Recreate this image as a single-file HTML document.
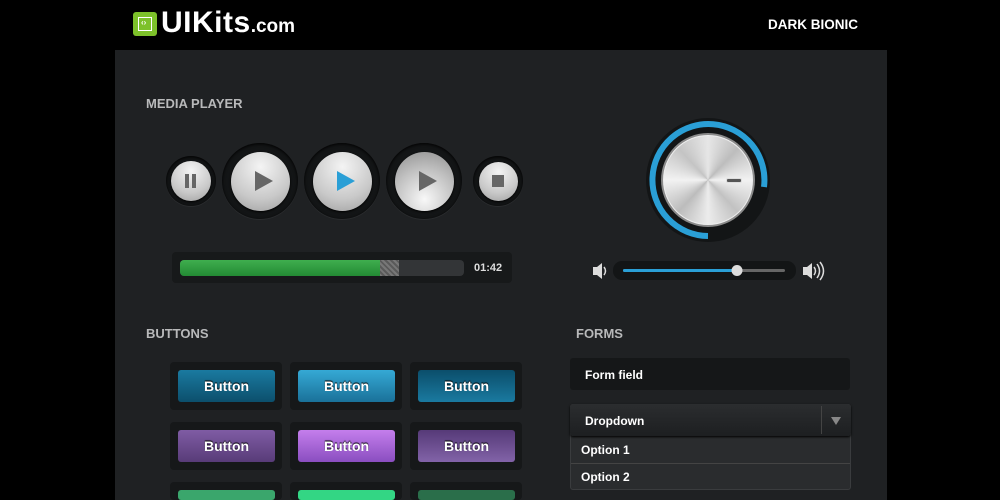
<!DOCTYPE html><html><head><style>
*{margin:0;padding:0;box-sizing:border-box}
html{width:1000px;height:500px;overflow:hidden}
body{width:1000px;height:500px;background:#000;position:relative;overflow:hidden;font-family:"Liberation Sans",sans-serif}
.a{position:absolute}
.panel{left:115px;top:50px;width:772px;height:450px;background:#1f2123}
.h{color:#b8b9ba;font-weight:bold;font-size:13px}
.well{border-radius:50%;background:#131516;box-shadow:inset 0 1px 3px #000,0 1px 0 #2a2c2e}
.btn{border-radius:50%;background:radial-gradient(circle at 50% 25%,#f4f4f4,#c9c9c9 60%,#9d9d9d);box-shadow:0 1px 2px #000}
.bw{width:112px;height:48px;background:#161819;border-radius:4px}
.b{width:97px;height:32px;border-radius:3px;color:#fff;font-weight:bold;font-size:14px;text-align:center;line-height:32px;text-shadow:0 -1px 1px #000}
</style></head><body>
<div class="a" style="left:133px;top:12px;width:24px;height:24px;background:#7dc12a;border-radius:3px"><div class="a" style="left:5px;top:5px;width:14px;height:14px;border:1.5px solid #fff"></div><div class="a" style="left:8px;top:6px;font-size:8px;color:#fff;font-weight:bold">‹›</div></div>
<div class="a" style="left:161px;top:6px;color:#fff;font-weight:bold;font-size:30px;letter-spacing:0.5px">UIKits<span style="font-size:19px;letter-spacing:0">.com</span></div>
<div class="a" style="left:768px;top:17px;color:#fff;font-weight:bold;font-size:13.5px">DARK BIONIC</div>
<div class="a panel"></div>
<div class="a h" style="left:146px;top:96px">MEDIA PLAYER</div>
<div class="a h" style="left:146px;top:326px">BUTTONS</div>
<div class="a h" style="left:576px;top:326px">FORMS</div>

<div class="a well" style="left:166px;top:156px;width:50px;height:50px"></div>
<div class="a btn" style="left:171px;top:161px;width:40px;height:40px"></div>
<div class="a" style="left:185px;top:174px;width:4px;height:14px;background:#666"></div><div class="a" style="left:192px;top:174px;width:4px;height:14px;background:#666"></div>
<div class="a well" style="left:222px;top:143px;width:76px;height:76px"></div>
<div class="a btn" style="left:231px;top:152px;width:59px;height:59px"></div>
<div class="a" style="left:255px;top:171px;border-left:18px solid #666;border-top:10px solid transparent;border-bottom:10px solid transparent"></div>
<div class="a well" style="left:304px;top:143px;width:76px;height:76px"></div>
<div class="a btn" style="left:313px;top:152px;width:59px;height:59px"></div>
<div class="a" style="left:337px;top:171px;border-left:18px solid #2a9fd6;border-top:10px solid transparent;border-bottom:10px solid transparent"></div>
<div class="a well" style="left:386px;top:143px;width:76px;height:76px"></div>
<div class="a btn" style="left:395px;top:152px;width:59px;height:59px;background:radial-gradient(circle at 50% 80%,#f8f8f8,#c0c0c0 55%,#8d8d8d)"></div>
<div class="a" style="left:419px;top:171px;border-left:18px solid #666;border-top:10px solid transparent;border-bottom:10px solid transparent"></div>
<div class="a well" style="left:473px;top:156px;width:50px;height:50px"></div>
<div class="a btn" style="left:479px;top:162px;width:39px;height:39px"></div>
<div class="a" style="left:492px;top:175px;width:12px;height:12px;background:#666"></div>

<div class="a" style="left:172px;top:252px;width:340px;height:31px;background:#17191a;border-radius:4px"></div>
<div class="a" style="left:180px;top:260px;width:284px;height:16px;background:#333537;border-radius:4px"></div>
<div class="a" style="left:180px;top:260px;width:200px;height:16px;background:linear-gradient(#3fae4e,#238a34);border-radius:4px 0 0 4px"></div>
<div class="a" style="left:380px;top:260px;width:19px;height:16px;background:repeating-linear-gradient(45deg,#777 0 2px,#5a5a5a 2px 4px)"></div>
<div class="a" style="left:474px;top:262px;color:#ddd;font-weight:bold;font-size:11px">01:42</div>

<svg class="a" style="left:640px;top:112px" width="136" height="136" viewBox="0 0 136 136">
<circle cx="68" cy="68" r="62" fill="#131516"/>
<path d="M68 124 A56 56 0 1 1 124 75" fill="none" stroke="#2a9fd6" stroke-width="6"/>
<circle cx="68" cy="68" r="47" fill="#8a8a8a"/>
</svg>
<div class="a" style="left:663px;top:135px;width:90px;height:90px;border-radius:50%;background:conic-gradient(from 0deg,#e6e6e6,#bdbdbd 12%,#f2f2f2 25%,#c2c2c2 38%,#ececec 50%,#bcbcbc 62%,#f2f2f2 75%,#c4c4c4 88%,#e6e6e6);border:1.5px solid #eee"></div>
<div class="a" style="left:726px;top:178px;width:16px;height:5px;border-radius:2px;background:#555;border:1px solid #ddd"></div>
<svg class="a" style="left:590px;top:261px" width="236" height="20">
<path d="M3 6h4l5-4v16l-5-4H3z" fill="#ddd"/><path d="M14 6q3 4 0 8" stroke="#ddd" fill="none" stroke-width="1.5"/>
<rect x="23" y="0" width="183" height="19" rx="9" fill="#131516"/>
<rect x="33" y="8" width="162" height="3" rx="1.5" fill="#666"/>
<rect x="33" y="8" width="114" height="3" rx="1.5" fill="#2a9fd6"/>
<circle cx="147" cy="9.5" r="5.5" fill="#ddd"/>
<path d="M213 6h4l5-4v16l-5-4h-4z" fill="#ddd"/><path d="M224 6q3 4 0 8M227 3q5 7 0 14M230 1q7 9 0 18" stroke="#ddd" fill="none" stroke-width="1.5"/>
</svg>

<div class="a bw" style="left:170px;top:362px"></div><div class="a bw" style="left:290px;top:362px"></div><div class="a bw" style="left:410px;top:362px"></div>
<div class="a bw" style="left:170px;top:422px"></div><div class="a bw" style="left:290px;top:422px"></div><div class="a bw" style="left:410px;top:422px"></div>
<div class="a bw" style="left:170px;top:482px;height:18px"></div><div class="a bw" style="left:290px;top:482px;height:18px"></div><div class="a bw" style="left:410px;top:482px;height:18px"></div>
<div class="a b" style="left:178px;top:370px;background:linear-gradient(#1a7aa0,#0c4f6c)">Button</div>
<div class="a b" style="left:298px;top:370px;background:linear-gradient(#35a9d5,#1a7199)">Button</div>
<div class="a b" style="left:418px;top:370px;background:linear-gradient(#0b4e6b,#1a7aa0)">Button</div>
<div class="a b" style="left:178px;top:430px;background:linear-gradient(#7f5ca4,#583c78)">Button</div>
<div class="a b" style="left:298px;top:430px;background:linear-gradient(#c47eec,#8a4ec0)">Button</div>
<div class="a b" style="left:418px;top:430px;background:linear-gradient(#563a78,#8263a8)">Button</div>
<div class="a b" style="left:178px;top:490px;height:10px;background:#3aa66c"></div>
<div class="a b" style="left:298px;top:490px;height:10px;background:#33d684"></div>
<div class="a b" style="left:418px;top:490px;height:10px;background:#2a6e4a"></div>

<div class="a" style="left:570px;top:358px;width:280px;height:32px;background:#151718;border-radius:3px;color:#fff;font-weight:bold;font-size:12px;padding:10px 15px">Form field</div>
<div class="a" style="left:570px;top:404px;width:281px;height:86px;background:#2a2c2e;border-radius:3px;border:1px solid #3a3c3e"></div>
<div class="a" style="left:570px;top:404px;width:281px;height:32px;background:linear-gradient(#2b2d2f,#1d1f21);border-radius:3px;color:#fff;font-weight:bold;font-size:12px;padding:10px 15px;box-shadow:0 1px 2px #000">Dropdown</div>
<div class="a" style="left:821px;top:406px;width:1px;height:28px;background:#444"></div>
<div class="a" style="left:831px;top:417px;border-top:8px solid #888;border-left:5px solid transparent;border-right:5px solid transparent"></div>
<div class="a" style="left:581px;top:443px;color:#fff;font-weight:bold;font-size:12px">Option 1</div>
<div class="a" style="left:571px;top:463px;width:279px;height:1px;background:#444"></div>
<div class="a" style="left:581px;top:470px;color:#fff;font-weight:bold;font-size:12px">Option 2</div>
</body></html>
